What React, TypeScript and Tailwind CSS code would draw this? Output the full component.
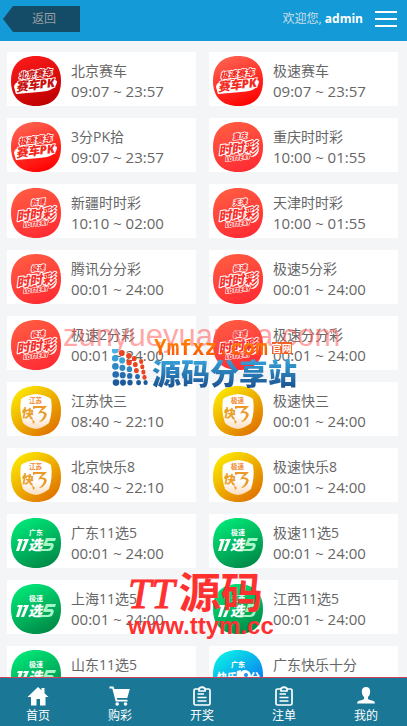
type Kind = "car" | "ssc" | "dice" | "pick" | "happy"

type Game = {
  name: string
  time: string
  kind: Kind
  tag: string
  dark?: boolean
}

const games: Game[] = [
  { name: "北京赛车", time: "09:07 ~ 23:57", kind: "car", tag: "北京赛车", dark: true },
  { name: "极速赛车", time: "09:07 ~ 23:57", kind: "car", tag: "极速赛车" },
  { name: "3分PK拾", time: "09:07 ~ 23:57", kind: "car", tag: "极速赛车" },
  { name: "重庆时时彩", time: "10:00 ~ 01:55", kind: "ssc", tag: "重庆" },
  { name: "新疆时时彩", time: "10:10 ~ 02:00", kind: "ssc", tag: "新疆" },
  { name: "天津时时彩", time: "10:00 ~ 01:55", kind: "ssc", tag: "天津" },
  { name: "腾讯分分彩", time: "00:01 ~ 24:00", kind: "ssc", tag: "极速" },
  { name: "极速5分彩", time: "00:01 ~ 24:00", kind: "ssc", tag: "极速" },
  { name: "极速2分彩", time: "00:01 ~ 24:00", kind: "ssc", tag: "极速" },
  { name: "极速分分彩", time: "00:01 ~ 24:00", kind: "ssc", tag: "极速" },
  { name: "江苏快三", time: "08:40 ~ 22:10", kind: "dice", tag: "江苏" },
  { name: "极速快三", time: "00:01 ~ 24:00", kind: "dice", tag: "极速" },
  { name: "北京快乐8", time: "08:40 ~ 22:10", kind: "dice", tag: "江苏" },
  { name: "极速快乐8", time: "00:01 ~ 24:00", kind: "dice", tag: "极速" },
  { name: "广东11选5", time: "00:01 ~ 24:00", kind: "pick", tag: "广东" },
  { name: "极速11选5", time: "00:01 ~ 24:00", kind: "pick", tag: "极速" },
  { name: "上海11选5", time: "00:01 ~ 24:00", kind: "pick", tag: "极速" },
  { name: "江西11选5", time: "00:01 ~ 24:00", kind: "pick", tag: "江西" },
  { name: "山东11选5", time: "00:01 ~ 24:00", kind: "pick", tag: "极速" },
  { name: "广东快乐十分", time: "00:01 ~ 24:00", kind: "happy", tag: "广东" },
]

const blob = "M25 0C41 0 50 9 50 25S41 50 25 50 0 41 0 25 9 0 25 0Z"

const Gradients = () => (
  <svg className="absolute size-0" aria-hidden="true">
    <defs>
      <linearGradient id="dark" x1="0.3" y1="0" x2="0.7" y2="1">
        <stop offset="0" stopColor="#fb1a1a" />
        <stop offset="1" stopColor="#be0000" />
      </linearGradient>
      <linearGradient id="car" x1="0.3" y1="0" x2="0.7" y2="1">
        <stop offset="0" stopColor="#ff6250" />
        <stop offset="1" stopColor="#ff0000" />
      </linearGradient>
      <linearGradient id="ssc" x1="0.3" y1="0" x2="0.7" y2="1">
        <stop offset="0" stopColor="#ff5b41" />
        <stop offset="1" stopColor="#ff2b33" />
      </linearGradient>
      <linearGradient id="dice" x1="0.15" y1="0.1" x2="0.8" y2="0.9">
        <stop offset="0" stopColor="#fbe400" />
        <stop offset="1" stopColor="#e17800" />
      </linearGradient>
      <linearGradient id="pick" x1="0.25" y1="0" x2="0.75" y2="1">
        <stop offset="0" stopColor="#00e878" />
        <stop offset="1" stopColor="#008746" />
      </linearGradient>
      <linearGradient id="happy" x1="0.2" y1="0" x2="0.8" y2="0.8">
        <stop offset="0" stopColor="#0af0e6" />
        <stop offset="1" stopColor="#0a78f0" />
      </linearGradient>
      <linearGradient id="cube" x1="0" y1="0" x2="0" y2="1">
        <stop offset="0" stopColor="#fff" />
        <stop offset="0.6" stopColor="#fff" />
        <stop offset="1" stopColor="#fbdcc0" />
      </linearGradient>
    </defs>
  </svg>
)

const CarArt = ({ game }: { game: Game }) => (
  <>
    <path d="M3 31Q3 27 9 25L40 22 46 25Q46 35 28 36L5 38Z" fill="#fff" />
    <g
      transform="rotate(-7 25 25)"
      fill={game.dark ? "#c81010" : "#f32a22"}
      stroke="#fff"
      strokeWidth="1.6"
      strokeLinejoin="round"
      paintOrder="stroke"
      fontStyle="italic"
      fontWeight="900"
    >
      <text x="8" y="21" fontSize="8.500">{game.tag}</text>
      <text x="4" y="33" fontSize="12">赛车PK</text>
    </g>
  </>
)

const SscArt = ({ game }: { game: Game }) => (
  <>
    <g
      transform="rotate(-7 25 25)"
      fill="#f5322e"
      stroke="#fff"
      strokeWidth="2"
      strokeLinejoin="round"
      paintOrder="stroke"
      fontStyle="italic"
      fontWeight="900"
    >
      <text x="21" y="17" fontSize="7" strokeWidth="1.500">{game.tag}</text>
      <text x="5" y="31" fontSize="13">时时彩</text>
      <text x="11" y="38" fontSize="6" strokeWidth="1">LOTTERY</text>
    </g>
    <path d="M37 35Q43 33 46 26Q46 35 37 35Z" fill="#fff" />
  </>
)

const DiceArt = ({ game }: { game: Game }) => (
  <>
    <path d="M25 8Q35 9 40 13Q42 25 38 37Q32 42 25 43Q17 42 12 37Q8 25 10 13Q15 9 25 8Z" fill="url(#cube)" />
    <text x="18" y="17" fontSize="6.500" fontWeight="900" fill="#f29446">{game.tag}</text>
    <text x="11" y="32" fontSize="12" fontWeight="900" fill="#eba02a" transform="rotate(8 17 27)">快</text>
    <path d="M22 20L36 20Q33 24 30 25Q38 26 35 31Q32 36 28 36Q33 32 33 28Q30 26 27 28Q29 24 31 22L25 22L22 23Z" fill="#eb9a2a" />
    <path d="M21 33L24 36L22 38Z" fill="#eba02a" />
  </>
)

const PickArt = ({ game }: { game: Game }) => (
  <g fill="#fff">
    <text x="25" y="17" fontSize="7" fontWeight="700" textAnchor="middle">{game.tag}</text>
    <path d="M7 21H12L8 33H5L8 23H6ZM13 21H18L13 33H10L14 23H12Z" />
    <text x="17" y="32" fontSize="14" fontWeight="900" fontStyle="italic">选</text>
    <path d="M35 20H45L44 23H37L36 25H41Q44 26 42 30Q41 33 37 33H29L30 31H37Q39 31 40 28H32Z" fill="#a4f6c8" />
  </g>
)

const HappyArt = ({ game }: { game: Game }) => (
  <g fill="#fff" fontWeight="900">
    <text x="25" y="17" fontSize="7" textAnchor="middle">{game.tag}</text>
    <text x="4" y="31" fontSize="10">快乐</text>
    <path d="M24 21L28 20L26 32H23Z" />
    <circle cx="32" cy="26" r="6" />
    <circle cx="33" cy="25" r="2" fill="#1496f0" />
    <text x="37" y="31" fontSize="10">分</text>
  </g>
)

const GameIcon = ({ game }: { game: Game }) => (
  <svg viewBox="0 0 50 50" className="size-[50px] shrink-0" aria-hidden="true">
    <path d={blob} fill={game.dark ? "url(#dark)" : `url(#${game.kind})`} />
    {game.kind === "car" && <CarArt game={game} />}
    {game.kind === "ssc" && <SscArt game={game} />}
    {game.kind === "dice" && <DiceArt game={game} />}
    {game.kind === "pick" && <PickArt game={game} />}
    {game.kind === "happy" && <HappyArt game={game} />}
  </svg>
)

const Clipboard = () => (
  <g fill="none" stroke="#fff" strokeWidth="1.7">
    <path d="M7 3H3.500Q2 3 2 4.500V17.500Q2 19 3.500 19H16.500Q18 19 18 17.500V4.500Q18 3 16.500 3H13" />
    <path d="M7 2.500Q10 0 13 2.500V5H7Z" />
    <path d="M5.500 8H12M5.500 11.500H14.500M5.500 15H14.500" strokeWidth="1.500" />
  </g>
)

const tabs = [
  {
    name: "首页",
    icon: (
      <path
        d="M10 1L13.500 4.300V2H16.500V7.200L20.500 11H17.500V19.500H12V13H8.500V19.500H3V11H-0.500Z"
        fill="#fff"
      />
    ),
  },
  {
    name: "购彩",
    icon: (
      <g fill="#fff">
        <path d="M-0.500 0.500H3.500L4.300 3H19.800L17.300 12H6.800L7.300 13.800H17.500V15.500H5.700L2.300 2.500H-0.500Z" />
        <circle cx="7.200" cy="18" r="1.800" />
        <circle cx="15.500" cy="18" r="1.800" />
      </g>
    ),
  },
  { name: "开奖", icon: <Clipboard /> },
  { name: "注单", icon: <Clipboard /> },
  {
    name: "我的",
    icon: (
      <path
        d="M10 1Q14.200 1 14.200 5.500Q14.200 9 12 11V13Q13 14 17 14.700Q19 15.300 19 17.500H1Q1 15.300 3 14.700Q7 14 8 13V11Q5.800 9 5.800 5.500Q5.800 1 10 1Z"
        fill="#fff"
      />
    ),
  },
]

const dotRows = [0, 1, 2, 3, 4]
const dotBlues = ["#49b4e6", "#3aa0d8", "#2e86c4", "#246cae", "#1d5a9c"]

const App = () => {
  return (
    <div className="relative flex h-screen flex-col overflow-hidden bg-[#f4f5f7] font-['Open_Sans','Noto_Sans_CJK_SC',sans-serif] text-[#666]">
      <Gradients />

      <header className="flex h-[41px] shrink-0 items-start justify-between bg-[#149bd7] pr-[10px] pl-[3px]">
        <button className="mt-[6px] flex h-[26px] w-[77px] items-center bg-[#144b66] pl-[29px] text-xs text-[#9a9fa3] [clip-path:polygon(0_50%,10px_0,100%_0,100%_100%,10px_100%)]">
          返回
        </button>
        <div className="flex h-[38px] items-center gap-3">
          <p className="text-xs text-[#cfdfe6]">
            欢迎您, <b className="text-white">admin</b>
          </p>
          <button aria-label="菜单" className="flex w-[22px] flex-col gap-[5px]">
            <span className="h-[2px] bg-white" />
            <span className="h-[2px] bg-white" />
            <span className="h-[2px] bg-white" />
          </button>
        </div>
      </header>

      <main className="min-h-0 flex-1 overflow-y-auto pt-[11px] pr-[9px] pl-[7px] [scrollbar-width:none]">
        <div className="grid grid-cols-2 gap-x-[13px] gap-y-3">
          {games.map((game) => (
            <a key={game.name} href="#" className="flex h-[54px] gap-[10px] bg-white pt-1 pl-1">
              <GameIcon game={game} />
              <div className="pt-1 whitespace-nowrap">
                <p className="text-sm leading-[22px]">{game.name}</p>
                <p className="text-[15px] leading-[18px]">{game.time}</p>
              </div>
            </a>
          ))}
        </div>
      </main>

      <nav className="h-[49px] shrink-0 border-t border-[#d0405c] bg-[#1a7896]">
        <div className="-ml-[3px] grid grid-cols-5 pt-2">
          {tabs.map((tab) => (
            <a key={tab.name} href="#" className="flex flex-col items-center text-xs leading-5 text-white">
              <svg viewBox="0 0 20 20" className="size-5 overflow-visible" aria-hidden="true">
                {tab.icon}
              </svg>
              {tab.name}
            </a>
          ))}
        </div>
      </nav>

      {/* site stamps lying over the list */}
      <p className="pointer-events-none absolute top-[320px] left-[63px] font-['Liberation_Sans'] text-[31px] leading-8 text-[#ff5050]/50">
        zunyueyuanma.com
      </p>

      <div className="pointer-events-none absolute top-[337px] left-[112px] flex items-end">
        <svg viewBox="0 0 40 40" className="size-10" aria-hidden="true">
          {dotRows.map((row) =>
            dotRows.map((col) => (
              <ellipse
                key={`${row}-${col}`}
                cx={4 + col * 7 - (4 - row) * 0.3 + (col > 2 ? (row - 2) * 0.8 : 0)}
                cy={4 + row * 7.4 + (col - 1) * (4 - row) * 0.7}
                rx={3.3 - col * 0.3}
                ry={3.3 - col * 0.2}
                fill={col + (4 - row) > 4 ? "#ea4420" : dotBlues[row]}
              />
            ))
          )}
        </svg>
        <div>
          <p className="flex h-[22px] items-center gap-1 pl-[2px]">
            <span className="bg-linear-to-b from-[#ff8c00] to-[#fa4a08] bg-clip-text font-['DejaVu_Sans_Mono'] text-[21px] leading-[22px] font-bold text-transparent">
              Ymfxz.com
            </span>
            <span className="bg-[#f0602a] text-[10px] leading-3 font-bold text-white">官网</span>
          </p>
          <p className="bg-linear-to-b from-[#38a4dc] to-[#1a4f8c] bg-clip-text text-[29px] leading-[30px] font-black text-transparent">
            源码分享站
          </p>
        </div>
      </div>

      <div className="pointer-events-none absolute top-[574px] left-[128px] text-[#ff3030]">
        <p className="flex h-10 items-center gap-1 font-['Liberation_Serif','Noto_Sans_CJK_SC'] text-[42px] leading-10">
          <span className="italic [-webkit-text-stroke:1px_#ff3030]">TT</span>
          <span className="font-bold">源码</span>
        </p>
        <p className="h-6 font-['Liberation_Sans'] text-2xl leading-6 font-bold">www.ttym.cc</p>
      </div>
    </div>
  )
}

export default App
